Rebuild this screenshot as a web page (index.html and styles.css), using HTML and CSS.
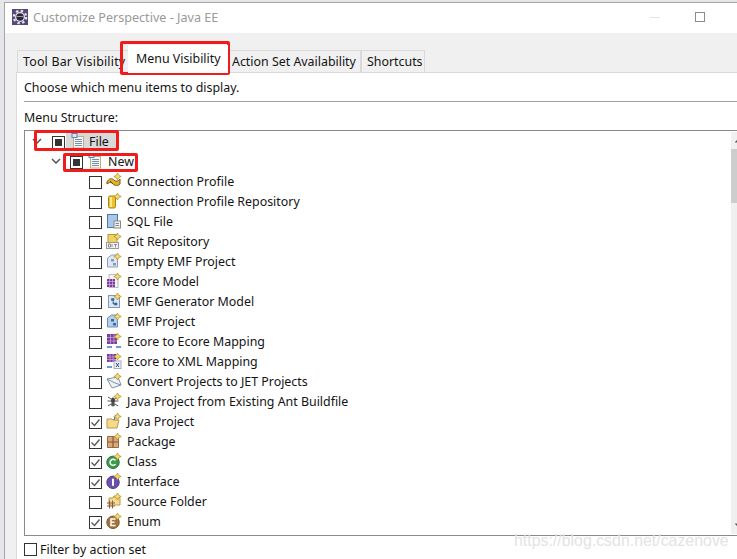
FILE: index.html
```html
<!DOCTYPE html>
<html lang="en">
<head>
<meta charset="utf-8">
<title>Customize Perspective - Java EE</title>
<link rel="stylesheet" href="styles.css">
</head>
<body>
<svg class="defs" width="0" height="0" aria-hidden="true">
  <defs>
    <g id="spark"><path d="M11.5 0l1.200 2.300 2.500 1.200-2.500 1.200-1.200 2.300-1.200-2.300-2.500-1.200 2.500-1.200z" fill="#f9dc6c" stroke="#a98a2c" stroke-width=".7"/></g>
    <g id="menu"><rect x="3.500" y="3.500" width="10" height="11.500" fill="#fbf7e8" stroke="#b8ae84"/><rect x="2" y="0.500" width="5" height="4" fill="#dbe6f5" stroke="#5a82b8"/><path d="M5 6.500h7M5 8.500h7M5 10.500h7M5 12.500h7" stroke="#6a8fc4"/></g>
  </defs>
</svg>
<div class="window">
  <header class="titlebar">
    <svg class="appicon" width="16" height="16" viewBox="0 0 16 16"><rect width="16" height="16" fill="#56467c"/><circle cx="8" cy="8" r="6.200" fill="none" stroke="#e6e6ea" stroke-width="2.200" stroke-dasharray="2.400 2.470"/><circle cx="8" cy="8" r="5" fill="#e0e0e4"/><circle cx="8" cy="8" r="3.700" fill="#2c2738"/><path d="M4.500 7.500h7" stroke="#9a96aa"/></svg>
    <span class="title">Customize Perspective - Java EE</span>
    <span class="min"></span>
    <span class="max"></span>
  </header>
  <main class="body">
    <nav class="tabs">
      <span class="tab tab-first">Tool Bar Visibility</span>
      <span class="tab tab-active">Menu Visibility</span>
      <span class="tab tab-action">Action Set Availability</span>
      <span class="tab tab-short">Shortcuts</span>
    </nav>
    <section class="panel">
      <p class="hint">Choose which menu items to display.</p>
      <hr class="rule">
      <p class="label">Menu Structure:</p>
      <div class="tree">
        <div class="rows">
          <div class="row lvl0"><svg class="arrow" width="10" height="6" viewBox="0 0 10 6"><path d="M1 1l4 4 4-4" fill="none" stroke="#555" stroke-width="1.500"/></svg><span class="cb mixed"></span><span class="sel"><svg class="ic" width="16" height="16" viewBox="0 0 16 16"><use href="#menu"/></svg><span class="txt">File</span></span></div>
          <div class="row lvl1"><svg class="arrow" width="10" height="6" viewBox="0 0 10 6"><path d="M1 1l4 4 4-4" fill="none" stroke="#555" stroke-width="1.500"/></svg><span class="cb mixed"></span><svg class="ic" width="16" height="16" viewBox="0 0 16 16"><use href="#menu"/></svg><span class="txt">New</span></div>

          <div class="row lvl2"><span class="cb"></span><svg class="ic" width="16" height="16" viewBox="0 0 16 16"><path d="M1 9c2-4 5-4 7-2s5 1 6-1v5c-2 2-5 2-7 0s-3-2-6 0z" fill="#e3b02a" stroke="#7a5a10"/><path d="M4 8l3 3" stroke="#5a4210"/><use href="#spark"/></svg><span class="txt">Connection Profile</span></div>
          <div class="row lvl2"><span class="cb"></span><svg class="ic" width="16" height="16" viewBox="0 0 16 16"><rect x="2.500" y="3" width="7" height="12" rx="1.500" fill="#eec12e" stroke="#a98315"/><rect x="4" y="4" width="2" height="10" fill="#fbe88f"/><use href="#spark"/></svg><span class="txt">Connection Profile Repository</span></div>
          <div class="row lvl2"><span class="cb"></span><svg class="ic" width="16" height="16" viewBox="0 0 16 16"><rect x="1.500" y="1.500" width="10" height="13" fill="#a9c8e8" stroke="#4a78aa"/><rect x="8" y="8" width="6.500" height="7" fill="#f2f2f2" stroke="#888"/><path d="M9.500 10.500h3.500M9.500 12.500h3.500" stroke="#888"/></svg><span class="txt">SQL File</span></div>
          <div class="row lvl2"><span class="cb"></span><svg class="ic" width="16" height="16" viewBox="0 0 16 16"><rect x="2" y="1.500" width="9" height="9" fill="#f0d264" stroke="#b59a35"/><rect x=".5" y="9.500" width="12" height="6" fill="#f2f2f2" stroke="#9a9a9a"/><path d="M2.500 11h2v3h-2zM6 11v3M8 11.500h3M9.500 11.500v3" stroke="#777" fill="none" stroke-width=".8"/><use href="#spark"/></svg><span class="txt">Git Repository</span></div>
          <div class="row lvl2"><span class="cb"></span><svg class="ic" width="16" height="16" viewBox="0 0 16 16"><path d="M1.500 5l4-3h6v12h-10z" fill="#dfe7f2" stroke="#8aa0bd"/><rect x="5" y="6" width="3" height="2.500" fill="#8a9bb0"/><rect x="7" y="10" width="3" height="2.500" fill="#8a9bb0"/><use href="#spark"/></svg><span class="txt">Empty EMF Project</span></div>
          <div class="row lvl2"><span class="cb"></span><svg class="ic" width="16" height="16" viewBox="0 0 16 16"><rect x="3" y="1.500" width="9" height="13" fill="#f4f4f4" stroke="#bbb"/><rect x="1" y="6" width="8" height="8" fill="#7c3c9c"/><path d="M1 8.500h8M1 11.500h8M3.500 6v8M6.500 6v8" stroke="#c9a2dc" stroke-width=".8"/><use href="#spark"/></svg><span class="txt">Ecore Model</span></div>
          <div class="row lvl2"><span class="cb"></span><svg class="ic" width="16" height="16" viewBox="0 0 16 16"><rect x="2.500" y="2.500" width="11" height="12" fill="#dce6f2" stroke="#7f99b8"/><path d="M5.500 5.500h2.500v2h-2.500zM8.500 10h2.500v2h-2.500zM7 8v3h1.500" fill="#3d6a9a" stroke="#3d6a9a" stroke-width=".7"/><use href="#spark"/></svg><span class="txt">EMF Generator Model</span></div>
          <div class="row lvl2"><span class="cb"></span><svg class="ic" width="16" height="16" viewBox="0 0 16 16"><path d="M1.500 5l4-3h6v12h-10z" fill="#b8cfe8" stroke="#6a8fb8"/><rect x="5" y="6" width="3" height="2.500" fill="#3d6a9a"/><rect x="7" y="10" width="3" height="2.500" fill="#3d6a9a"/><use href="#spark"/></svg><span class="txt">EMF Project</span></div>
          <div class="row lvl2"><span class="cb"></span><svg class="ic" width="16" height="16" viewBox="0 0 16 16"><rect x="1" y="1" width="10" height="10" fill="#7c3c9c"/><path d="M1 4.500h10M1 8h10M4.500 1v10M8 1v10" stroke="#c9a2dc" stroke-width=".8"/><path d="M1 14h5M10 14h5" stroke="#3a7bc8" stroke-width="1.500"/><use href="#spark"/></svg><span class="txt">Ecore to Ecore Mapping</span></div>
          <div class="row lvl2"><span class="cb"></span><svg class="ic" width="16" height="16" viewBox="0 0 16 16"><rect x="1" y="1" width="9" height="8" fill="#7c3c9c"/><path d="M1 4h9M1 6.500h9M4 1v8M7 1v8" stroke="#c9a2dc" stroke-width=".8"/><rect x="8" y="8" width="7" height="7.500" fill="#eef1f5" stroke="#aab"/><path d="M10 10l3 4M13 10l-3 4" stroke="#2a4a80"/><path d="M1 14h5" stroke="#3a7bc8" stroke-width="1.500"/><use href="#spark"/></svg><span class="txt">Ecore to XML Mapping</span></div>
          <div class="row lvl2"><span class="cb"></span><svg class="ic" width="16" height="16" viewBox="0 0 16 16"><path d="M1 6l11 -2 3 8-9 3z" fill="#eef2f6" stroke="#7f93a8"/><path d="M1 6l8 4 6 2" fill="none" stroke="#7f93a8"/><use href="#spark"/></svg><span class="txt">Convert Projects to JET Projects</span></div>
          <div class="row lvl2"><span class="cb"></span><svg class="ic" width="16" height="16" viewBox="0 0 16 16"><ellipse cx="7" cy="7.500" rx="2" ry="3" fill="#444"/><circle cx="7" cy="11.500" r="2" fill="#555"/><path d="M2 4l3 2M12 4l-3 2M1.500 8h3.500M12.500 8h-3.500M2 13l3-2M12 13l-3-2" stroke="#555"/><use href="#spark"/></svg><span class="txt">Java Project from Existing Ant Buildfile</span></div>
          <div class="row lvl2"><span class="cb on"><svg width="13" height="13" viewBox="0 0 13 13"><path d="M2.500 6.500l3 3 5-6" fill="none" stroke="#555" stroke-width="1.300"/></svg></span><svg class="ic" width="16" height="16" viewBox="0 0 16 16"><path d="M1 6h5l1 1h6l-2 8h-10z" fill="#f5d98a" stroke="#b89a4c"/><path d="M8 7l2-5" stroke="#4a78aa" stroke-width="1.500"/><use href="#spark"/></svg><span class="txt">Java Project</span></div>
          <div class="row lvl2"><span class="cb on"><svg width="13" height="13" viewBox="0 0 13 13"><path d="M2.500 6.500l3 3 5-6" fill="none" stroke="#555" stroke-width="1.300"/></svg></span><svg class="ic" width="16" height="16" viewBox="0 0 16 16"><path d="M1.500 3.500h11v11h-11z" fill="#d9a77c" stroke="#9c6b42"/><path d="M7 3.500v11M1.500 9h11" stroke="#8a5a34" stroke-width="1.200"/><use href="#spark"/></svg><span class="txt">Package</span></div>
          <div class="row lvl2"><span class="cb on"><svg width="13" height="13" viewBox="0 0 13 13"><path d="M2.500 6.500l3 3 5-6" fill="none" stroke="#555" stroke-width="1.300"/></svg></span><svg class="ic" width="16" height="16" viewBox="0 0 16 16"><circle cx="7" cy="9.300" r="6.200" fill="#3c9a4c" stroke="#24703a"/><path d="M9.500 7.500a3 3 0 1 0 0 3.600" fill="none" stroke="#fff" stroke-width="1.500"/><use href="#spark"/></svg><span class="txt">Class</span></div>
          <div class="row lvl2"><span class="cb on"><svg width="13" height="13" viewBox="0 0 13 13"><path d="M2.500 6.500l3 3 5-6" fill="none" stroke="#555" stroke-width="1.300"/></svg></span><svg class="ic" width="16" height="16" viewBox="0 0 16 16"><circle cx="7" cy="9.300" r="6.200" fill="#6a50ac" stroke="#4c3888"/><path d="M7 5.800v7" stroke="#fff" stroke-width="2"/><use href="#spark"/></svg><span class="txt">Interface</span></div>
          <div class="row lvl2"><span class="cb"></span><svg class="ic" width="16" height="16" viewBox="0 0 16 16"><path d="M3 5h4l1-2 6 2v7h-11z" fill="#f5d98a" stroke="#b89a4c"/><path d="M1 10h8M1 13h8M3.500 7.500v8M6.500 7.500v8" stroke="#8a5a44"/><use href="#spark"/></svg><span class="txt">Source Folder</span></div>
          <div class="row lvl2"><span class="cb on"><svg width="13" height="13" viewBox="0 0 13 13"><path d="M2.500 6.500l3 3 5-6" fill="none" stroke="#555" stroke-width="1.300"/></svg></span><svg class="ic" width="16" height="16" viewBox="0 0 16 16"><circle cx="7" cy="9.300" r="6.200" fill="#a5733c" stroke="#7c5226"/><path d="M9.500 6.100h-4.500v6.400h4.500M5 9.300h3.500" fill="none" stroke="#fff" stroke-width="1.500"/><use href="#spark"/></svg><span class="txt">Enum</span></div>
        </div>
        <div class="scrollbar">
          <span class="sb-btn"><svg width="7" height="5" viewBox="0 0 7 5"><path d="M0.500 4.500l3-3 3 3" fill="none" stroke="#555" stroke-width="1.300"/></svg></span>
          <span class="sb-thumb"></span>
          <span class="sb-space"></span>
          <span class="sb-btn"><svg width="7" height="5" viewBox="0 0 7 5"><path d="M0.500 .5l3 3 3-3" fill="none" stroke="#555" stroke-width="1.300"/></svg></span>
        </div>
      </div>
      <label class="filter"><span class="cb"></span><span class="txt">Filter by action set</span></label>
    </section>
  </main>
</div>
<span class="mark mark-tab"></span>
<span class="mark mark-file"></span>
<span class="mark mark-new"></span>
<span class="watermark">https://blog.csdn.net/cazenove</span>
</body>
</html>
```
FILE: styles.css
```css
* { box-sizing: border-box; }
html, body { margin: 0; padding: 0; height: 100%; }
body {
  position: relative;
  width: 737px;
  height: 559px;
  overflow: hidden;
  background: #e6e6ea;
  font-family: "Noto Sans", "Open Sans", sans-serif;
  font-size: 12.4px;
  color: #141414;
}
.defs { position: absolute; }
.window {
  margin: 2px 0 0 4px;
  height: 557px;
  border-top: 1px solid #a6a6a6;
  border-left: 1px solid #a6a6a6;
  background: #f0f0f0;
  display: flex;
  flex-direction: column;
}
.titlebar {
  height: 30px;
  flex: none;
  background: #fff;
  display: flex;
  align-items: center;
  padding: 0 0 2px 7px;
}
.appicon { flex: none; }
.title { margin-left: 5px; color: #9a9a9a; font-size: 12.6px; }
.min { margin-left: auto; width: 10px; height: 1px; background: #e2e2e2; }
.max { margin-left: 35px; margin-right: 32px; width: 10px; height: 10px; border: 1px solid #8c8c8c; }
.body { flex: 1; padding: 17px 0 0 11px; display: flex; flex-direction: column; }
.tabs { height: 22px; display: flex; align-items: flex-end; flex: none; padding-left: 1px; }
.tab {
  height: 22px;
  background: #f0f0f0;
  border: 1px solid #d9d9d9;
  border-bottom: 0;
  display: flex;
  align-items: center;
  white-space: nowrap;
}
.tab-first { width: 111px; padding-left: 5px; border-right: 0; overflow: hidden; letter-spacing: .2px; }
.tab-active { width: 100px; height: 28px; background: #fff; padding: 0 0 2px 8px; border: 0; z-index: 1; margin-bottom: -1px; }
.tab-action { width: 133px; padding-left: 4px; border-left: 0; }
.tab-short { width: 64px; padding-left: 5px; }
.panel {
  flex: 1;
  background: #fff;
  border-top: 1px solid #d9d9d9;
  border-left: 1px solid #d9d9d9;
  padding: 0 0 0 7px;
  display: flex;
  flex-direction: column;
}
.hint { margin: 6px 0 0; line-height: 18px; }
.rule { margin: 4px 0 0; border: 0; height: 1px; background: #a0a0a0; }
.label { margin: 7px 0 0; line-height: 18px; }
.tree {
  margin-top: 3px;
  height: 406px;
  border: 1px solid #8a8a8a;
  border-right: 0;
  display: flex;
  flex: none;
}
.rows { flex: 1; }
.row { height: 20px; display: flex; align-items: center; white-space: nowrap; }
.lvl0 { padding-left: 7px; }
.lvl1 { padding-left: 26px; }
.lvl2 { padding-left: 64px; }
.arrow { flex: none; margin-right: 9px; }
.lvl0 .arrow { margin-right: 10px; }
.cb {
  flex: none;
  width: 13px;
  height: 13px;
  border: 1px solid #333;
  background: #fff;
  display: flex;
  align-items: center;
  justify-content: center;
}
.row .cb { margin-top: 2px; }
.cb svg { flex: none; margin: -1px; }
.mixed::after { content: ""; width: 7px; height: 7px; background: #333; }
.ic { flex: none; margin-left: 4px; }
.txt { margin-left: 5px; }
.sel { display: flex; align-items: center; background: #d9d9d9; padding: 0 10px 0 4px; height: 17px; margin-left: 1px; }
.sel .ic { margin-left: 0; }
.sel .txt { margin-left: 3px; }
.scrollbar { width: 6px; flex: none; display: flex; flex-direction: column; background: #f0f0f0; margin: 1px 0; overflow: hidden; }
.sb-btn { height: 17px; flex: none; display: flex; align-items: center; padding-left: 4px; }
.sb-btn svg { flex: none; }
.sb-thumb { height: 54px; background: #cdcdcd; flex: none; }
.sb-space { flex: 1; }
.filter { display: flex; align-items: center; margin-top: 4px; height: 18px; }
.filter .txt { margin-left: 3px; }
.mark { position: absolute; border: 3px solid #f01c1c; border-radius: 2px; }
.mark-tab { left: 120px; top: 41px; width: 110px; height: 34px; }
.mark-file { left: 34px; top: 130px; width: 85px; height: 21px; }
.mark-new { left: 63px; top: 153px; width: 75px; height: 19px; }
.watermark {
  position: absolute;
  left: 514px;
  top: 532px;
  font-family: "Liberation Sans", sans-serif;
  font-size: 15.9px;
  color: #e3e3e3;
  white-space: nowrap;
}
```
